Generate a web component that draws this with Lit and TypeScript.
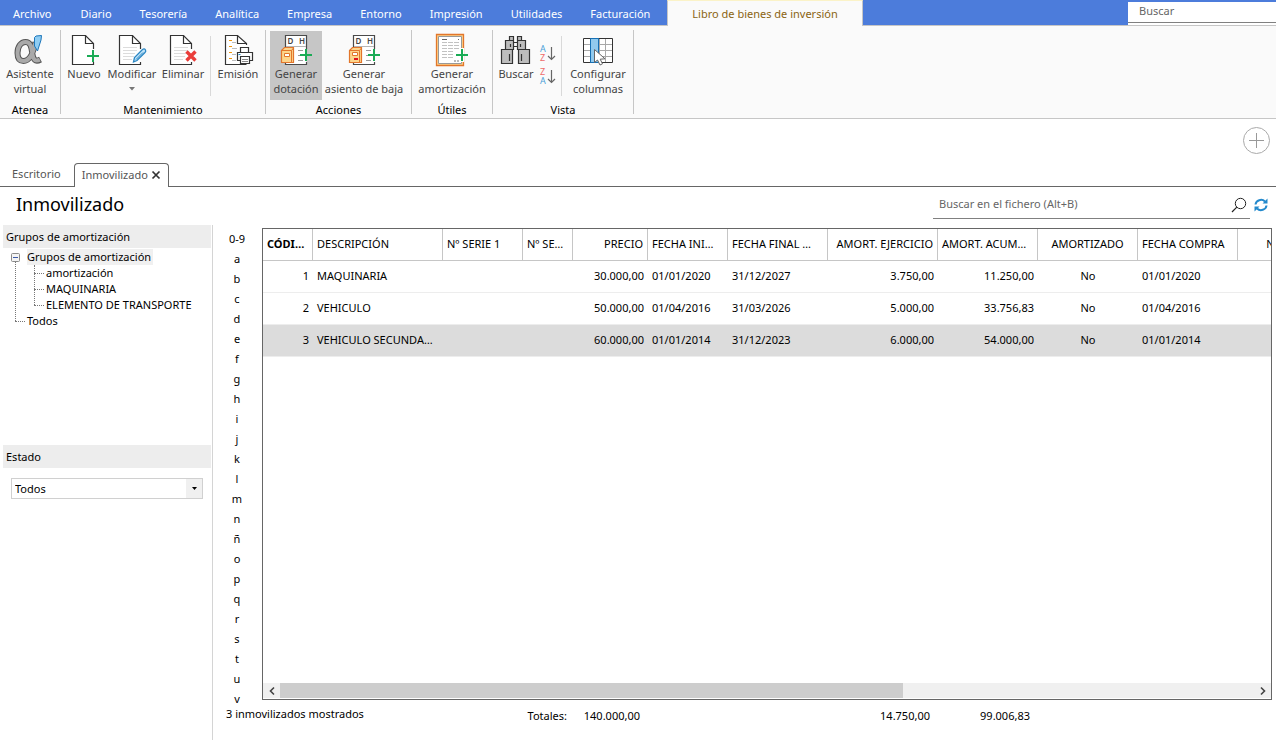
import { LitElement, html, svg, css } from "lit";
import { customElement, state } from "lit/decorators.js";
import { classMap } from "lit/directives/class-map.js";

const MENU = ["Archivo", "Diario", "Tesorería", "Analítica", "Empresa", "Entorno", "Impresión", "Utilidades", "Facturación"];

const LETTERS = ["0-9", ..."abcdefghijklmnñopqrstuv"];

interface Column { label: string; width: number; align: string; strong?: boolean }

const COLUMNS: Column[] = [
  { label: "CÓDIGO", width: 50, align: "right", strong: true },
  { label: "DESCRIPCIÓN", width: 130, align: "left" },
  { label: "Nº SERIE 1", width: 80, align: "left" },
  { label: "Nº SERIE 2", width: 50, align: "left" },
  { label: "PRECIO", width: 75, align: "right" },
  { label: "FECHA INICIO", width: 80, align: "left" },
  { label: "FECHA FINAL MÁXIMA", width: 100, align: "left" },
  { label: "AMORT. EJERCICIO", width: 110, align: "right" },
  { label: "AMORT. ACUMULADA", width: 100, align: "right" },
  { label: "AMORTIZADO", width: 100, align: "center" },
  { label: "FECHA COMPRA", width: 100, align: "left" },
  { label: "Nº FACTURA", width: 120, align: "center" },
];

const ROWS = [
  ["1", "MAQUINARIA", "", "", "30.000,00", "01/01/2020", "31/12/2027", "3.750,00", "11.250,00", "No", "01/01/2020", ""],
  ["2", "VEHICULO", "", "", "50.000,00", "01/04/2016", "31/03/2026", "5.000,00", "33.756,83", "No", "01/04/2016", ""],
  ["3", "VEHICULO SECUNDARIO", "", "", "60.000,00", "01/01/2014", "31/12/2023", "6.000,00", "54.000,00", "No", "01/01/2014", ""],
];

const plus = (x: number, y: number) => svg`
  <path d="M${x - 6} ${y}h12M${x} ${y - 6}v12" stroke="#1aab55" stroke-width="2" fill="none"/>`;

const sheet = svg`
  <path d="M24.5 14V8.5L16.5 .5H3.5V29.5H24.5V27" fill="#fff" stroke="#333" stroke-width="1.2"/>
  <path d="M16.5 .5V8.5H24.5" fill="none" stroke="#333" stroke-width="1.2"/>`;

const sheetLines = svg`
  <path d="M7 12.5h14M7 15.5h14M7 18.5h12M7 21.5h11M7 24.5h9" stroke="#dcdcdc" fill="none"/>`;

const ledger = (mark: unknown) => svg`
  <path d="M26.5 14V.5H5.5V29.5H26.5V27" fill="#fff" stroke="#4a4a4a" stroke-width="1.2"/>
  <path d="M6 11.5H26" stroke="#b5b5b5"/>
  <text x="7.5" y="9" font-size="8" font-weight="600" fill="#444">D</text>
  <text x="19" y="9" font-size="8" font-weight="600" fill="#444">H</text>
  <path d="M18 15.5h5M18 20.5h2M18 25.5h5M25 15.5h1M25 25.5h1" stroke="#9a9a9a"/>
  <path d="M1.5 15.5L4.5 12.5H13.5V27.5H1.5Z" fill="#fdd58c" stroke="#e2762b" stroke-width="1.2"/>
  <path d="M1.5 15.5H11.5V27.5M11.5 15.5L13.5 13" fill="none" stroke="#e2762b"/>
  ${mark}
  ${plus(26, 20)}`;

const ICONS: Record<string, unknown> = {
  atenea: svg`
    <path d="M21.5 7C19.5 17 16.5 26 9.5 26C5 26 3.5 22.5 3.5 18C3.5 11.5 7 7 11.5 7C17.5 7 17.5 14 18.5 19.5C19.2 24 21 27.5 26.5 24.5" fill="none" stroke="#555" stroke-width="6"/>
    <path d="M21.3 8C19.5 17 16.5 26 9.5 26C5 26 3.5 22.5 3.5 18C3.5 11.5 7 7 11.5 7C17.5 7 17.5 14 18.5 19.5C19.2 24 21 27 25.8 24.6" fill="none" stroke="#a9a9a9" stroke-width="4"/>
    <path d="M20.5 2.5L22 1L27.5 .5L27 5L23.5 16L20.5 11Z" fill="#8fcdf3" stroke="#1d76ba"/>`,
  nuevo: svg`<g transform="translate(1 0)">${sheet}${plus(24, 21)}</g>`,
  modificar: svg`${sheet}${sheetLines}
    <path d="M17.5 27L18.5 22.5L26.5 14.5Q28.5 13.2 29.5 15Q30.2 16.5 29 17.5L21 25.5Z" fill="#bfe3f8" stroke="#2b87c4" stroke-width="1.3"/>
    <path d="M20 24.5L27 17.5" stroke="#2b87c4"/>`,
  eliminar: svg`${sheet}${sheetLines}
    <path d="M19.5 16.5L28.5 25.5M28.5 16.5L19.5 25.5" stroke="#ea3d3a" stroke-width="3.4"/>`,
  emision: svg`
    <path d="M24.5 10V8.5L15.5 .5H3.5V29.5H24.5" fill="#fff" stroke="#333" stroke-width="1.2"/>
    <path d="M15.5 .5V8.5H24.5" fill="none" stroke="#333" stroke-width="1.2"/>
    <path d="M7 5.5h3M7 11.5h3M7 17.5h3M7 23.5h3" stroke="#f0960f" stroke-width="1.2"/>
    <path d="M10 7.5h4M10 13.5h5M10 19.5h4M10 25.5h4" stroke="#bdbdbd"/>
    <path d="M18.5 17.5V12.5H26.5V17.5" fill="#fff" stroke="#333" stroke-width="1.2"/>
    <path d="M15.5 17.5H30.5V25.5H15.5Z" fill="#fff" stroke="#333" stroke-width="1.2"/>
    <path d="M18.5 21.5H27.5V28.5H18.5Z" fill="#fff" stroke="#333" stroke-width="1.2"/>
    <path d="M20 24.5h6M20 26.5h6" stroke="#888"/><path d="M16.5 19.5h2" stroke="#1d86c8"/>`,
  dotacion: ledger(svg`<path d="M4.5 18.5h5v3h-5z" fill="#fff" stroke="#e2762b"/>`),
  baja: ledger(svg`<path d="M4.5 17.5h5v3h-5z" fill="#fff" stroke="#e2762b"/><path d="M6 24h4" stroke="#e01020" stroke-width="2"/>`),
  amortizacion: svg`<g transform="translate(-2 0)">
    <path d="M2.5 -.5H29.5V30.5H2.5Z" fill="#fdd58c" stroke="#e2762b" stroke-width="1.3"/>
    <path d="M4.5 1.5H27.5V28.5H4.5Z" fill="#fff" stroke="#999"/>
    <path d="M8 4.5h5M24 4.5h1" stroke="#666"/>
    <path d="M8 7.5h17M8 10.5h17M8 13.5h17M8 16.5h12M8 19.5h12M8 22.5h12" stroke="#c2c2c2" stroke-dasharray="5 1"/>
    <path d="M20 26h2M23 26h2" stroke="#bbb" stroke-width="2"/>
    <path d="M28 13V27M21 20H30" stroke="#fff" stroke-width="4"/>
    ${plus(28, 20)}</g>`,
  buscar: svg`
    <g fill="#bdbdbd" stroke="#333" stroke-width="1.2">
      <path d="M9.5 1.5h4v4h-4zM17.5 1.5h4v4h-4zM5.5 5.5h8v9h-8zM17.5 5.5h8v9h-8z"/>
      <path d="M1.5 14.5h11v14h-11zM18.5 14.5h11v14h-11z"/>
      <path d="M13.5 7.5h4M13.5 11.5h4M10.5 9v3M20.5 9v3M9.5 19v7M21.5 19v7" fill="none"/>
    </g>`,
  columnas: svg`
    <path d="M1.5 3.5H30.5V27.5H1.5Z" fill="#fff" stroke="#333"/>
    <path d="M2 9.5H30M2 15.5H30M2 21.5H30M17.5 4V27M23.5 4V27" stroke="#a8a8a8" fill="none"/>
    <path d="M8.5 3.5H16.5V27.5H8.5Z" fill="#92caee" stroke="#1670b5"/>
    <path d="M12.5 14.5V27.5L15.5 25L18 30L20.5 28.8L18.2 24.2L23 23.8Z" fill="#fff" stroke="#666"/>`,
};

const icon = (name: string) => html`<svg class="icon" width="32" height="32" viewBox="0 -1 32 32" aria-hidden="true">${ICONS[name]}</svg>`;

const sortIcon = (top: string, bottom: string, topColor: string, bottomColor: string) => html`
  <svg width="16" height="18" viewBox="0 0 16 18" aria-hidden="true">
    <text x="0" y="8" font-size="9" fill=${topColor}>${top}</text>
    <text x="0" y="17" font-size="9" fill=${bottomColor}>${bottom}</text>
    <path d="M11.5 3V15.5M8 12L11.5 15.5L15 12" fill="none" stroke="#666" stroke-width="1.2"/>
  </svg>`;

@customElement("app-root")
export class AppRoot extends LitElement {
  @state() private selected = 2;

  static styles = css`
    :host {
      display: flex;
      flex-direction: column;
      height: 100vh;
      overflow: hidden;
      background: #fff;
      color: #000;
      font: 11px/16px "Noto Sans", "Open Sans", sans-serif;
    }
    * { box-sizing: border-box; }
    button, input, select { font: inherit; color: inherit; border: 0; padding: 0; margin: 0; background: none; border-radius: 0; }
    svg { display: block; overflow: visible; }

    .menubar { display: flex; height: 26px; background: #4c7cdb; border-bottom: 1px solid #c6c6c6; flex: none; }
    .menu { padding: 2px 14px 0; color: #fff; }
    .menu:first-child { padding-right: 15px; padding-left: 13px; }
    .menu.context {
      height: 26px; margin-left: 3px; padding: 0 24px; color: #8a6412; background: #fafafa;
      border: 1px solid #c6c6c6; border-bottom: 0; border-top: 1px solid #fbf3c8;
    }
    .global-search {
      margin: 2px 0 0 auto; width: 148px; height: 21px; padding: 0 11px 3px; background: #fff;
      border-bottom: 1px solid #808080; box-shadow: 0 2px 0 #fff;
    }
    input::placeholder { color: #666; opacity: 1; }

    .ribbon { display: flex; height: 93px; background: #fafafa; border-bottom: 1px solid #c6c6c6; flex: none; padding-top: 4px; }
    .group { display: flex; flex-direction: column; height: 84px; border-right: 1px solid #c6c6c6; }
    .tools { display: flex; height: 70px; padding-top: 1px; }
    .caption { text-align: center; line-height: 20px; }
    .tool {
      display: flex; flex-direction: column; align-items: center; height: 69px; padding-top: 3px;
      color: #444; line-height: 15px; white-space: nowrap;
    }
    .tool.active { background: #c6c6c6; }
    .tool .icon { flex: none; }
    .tool .arrow { margin-top: 6px; }
    .w46 { width: 46px; } .w50 { width: 50px; } .w52 { width: 52px; }
    .w60 { width: 60px; } .w70 { width: 70px; } .w80 { width: 80px; } .w84 { width: 84px; }
    .rule { width: 1px; height: 60px; margin: 5px 1px 0; background: #d9d9d9; flex: none; }
    .mantenimiento .tools { padding-right: 1px; }
    .acciones .tools { padding-left: 4px; padding-right: 5px; }
    .sorts { display: flex; flex-direction: column; gap: 5px; width: 21px; padding: 13px 0 0 1px; }

    .tabs { display: flex; height: 68px; align-items: flex-end; border-bottom: 1px solid #666; flex: none; }
    .tab { height: 24px; padding: 0 0 1px 12px; color: #555; line-height: 22px; }
    .tab.current {
      display: flex; align-items: center; gap: 4px; margin: 0 0 -1px 13px; padding: 0 8px 2px 7px; background: #fff;
      border: 1px solid #666; border-bottom: 0; border-radius: 4px 4px 0 0;
    }
    .add { margin: 0 6px 32px auto; }

    .titlebar { display: flex; justify-content: space-between; height: 38px; flex: none; }
    h1 { margin: 0; padding: 4px 0 0 16px; font-size: 18px; line-height: 26px; font-weight: 400; }
    .finder { display: flex; padding-right: 8px; gap: 4px; }
    .field { display: flex; width: 317px; height: 32px; padding: 4px 3px 0 6px; border-bottom: 1px solid #808080; }
    .field input { flex: 1; min-width: 0; outline: 0; padding-bottom: 2px; }
    .refresh { height: 32px; padding-top: 4px; }

    .main { display: flex; flex: 1; min-height: 0; }
    aside { width: 213px; flex: none; padding-left: 3px; border-right: 1px solid #d4d4d4; }
    h2 { margin: 0 1px 0 0; height: 23px; padding-left: 3px; font: inherit; line-height: 24px; background: #ededed; }
    .groups { height: 220px; }
    ul { list-style: none; margin: 0; padding: 0; }
    .tree { padding: 1px 0 0 24px; }
    .tree li { position: relative; line-height: 16px; }
    .tree .leaf::before { content: ""; position: absolute; left: -12px; top: 8px; width: 10px; border-top: 1px dotted #777; }
    .tree .root > .label { display: inline-block; background: #f0f0f0; padding: 0 2px 0 0; }
    .tree .root::before { content: ""; position: absolute; left: -12px; top: 12px; bottom: -8px; border-left: 1px dotted #777; }
    .tree ul { padding-left: 19px; position: relative; }
    .tree ul::before { content: ""; position: absolute; left: 7px; top: 0; bottom: 8px; border-left: 1px dotted #777; }
    .expander { position: absolute; left: -16px; top: 4px; }
    .combo { display: grid; grid-template-columns: 1fr 16px; width: 192px; height: 21px; margin: 10px 0 0 8px; border: 1px solid #d0d0d0; }
    .combo select { grid-area: 1 / 1 / 2 / 3; appearance: none; padding-left: 3px; outline: 0; }
    .combo span { grid-area: 1 / 2; display: grid; place-items: center; background: #f0f0f0; pointer-events: none; }

    .letters { width: 48px; flex: none; display: flex; flex-direction: column; padding-top: 4px; margin: 0 1px -9px 0; }
    .letters button { height: 20px; flex: none; text-align: center; line-height: 20px; }
    .pane { display: flex; flex: 1; min-height: 0; }
    .workspace { display: flex; flex-direction: column; flex: 1; min-width: 0; padding-right: 4px; }
    .grid {
      display: flex; flex-direction: column; flex: 1; min-width: 0; margin-top: 3px; overflow: hidden;
      border: 1px solid #666;
    }
    .viewport { flex: 1; overflow: hidden; }
    table { border-collapse: separate; border-spacing: 0; table-layout: fixed; width: 1095px; }
    th, td { height: 32px; padding: 0 4px 1px; overflow: hidden; white-space: nowrap; text-overflow: ellipsis; font-weight: 400; }
    th { border-right: 1px solid #c6c6c6; border-bottom: 1px solid #c6c6c6; }
    th.left { padding-right: 8px; }
    th.strong { font-weight: 700; }
    td { border-bottom: 1px solid #ededed; }
    .left { text-align: left; }
    .right { text-align: right; }
    .center { text-align: center; }
    tr.selected td { background: #dcdcdc; }
    .scrollbar { display: flex; height: 16px; background: #f0f0f0; border-bottom: 1px solid #fff; flex: none; }
    .scrollbar button { width: 17px; display: grid; place-items: center; flex: none; }
    .rail { flex: 1; }
    .thumb { display: block; width: 64%; height: 15px; background: #cdcdcd; }
    .status { display: flex; height: 40px; flex: none; line-height: 16px; }
    .count { width: 264px; padding: 6px 0 0 13px; }
    .sum { padding-top: 8px; text-align: right; }
    .s1 { width: 90px; } .s2 { width: 73px; } .s3 { width: 290px; } .s4 { width: 100px; }
  `;

  private tool(name: string, lines: string[], width: string, active = false) {
    return html`<button class=${classMap({ tool: true, [width]: true, active })}>${icon(name)}${lines.map((l) => html`<span>${l}</span>`)}</button>`;
  }

  private ribbon() {
    return html`
      <div class="ribbon">
        <section class="group">
          <div class="tools">${this.tool("atenea", ["Asistente", "virtual"], "w60")}</div>
          <div class="caption">Atenea</div>
        </section>
        <section class="group mantenimiento">
          <div class="tools">
            ${this.tool("nuevo", ["Nuevo"], "w46")}
            <button class="tool w50">${icon("modificar")}<span>Modificar</span>
              <svg class="arrow" width="6" height="4" viewBox="0 0 6 4"><path d="M0 0H6L3 3.5Z" fill="#777"/></svg>
            </button>
            ${this.tool("eliminar", ["Eliminar"], "w52")}
            <span class="rule"></span>
            ${this.tool("emision", ["Emisión"], "w52")}
          </div>
          <div class="caption">Mantenimiento</div>
        </section>
        <section class="group acciones">
          <div class="tools">
            ${this.tool("dotacion", ["Generar", "dotación"], "w52", true)}
            ${this.tool("baja", ["Generar", "asiento de baja"], "w84")}
          </div>
          <div class="caption">Acciones</div>
        </section>
        <section class="group">
          <div class="tools">${this.tool("amortizacion", ["Generar", "amortización"], "w80")}</div>
          <div class="caption">Útiles</div>
        </section>
        <section class="group">
          <div class="tools">
            ${this.tool("buscar", ["Buscar"], "w46")}
            <div class="sorts">
              <button aria-label="Orden ascendente">${sortIcon("A", "Z", "#4a9fd8", "#ee6a6a")}</button>
              <button aria-label="Orden descendente">${sortIcon("Z", "A", "#ee6a6a", "#4a9fd8")}</button>
            </div>
            <span class="rule"></span>
            ${this.tool("columnas", ["Configurar", "columnas"], "w70")}
          </div>
          <div class="caption">Vista</div>
        </section>
      </div>`;
  }

  private sidebar() {
    return html`
      <aside>
        <section class="groups">
          <h2>Grupos de amortización</h2>
          <ul class="tree">
            <li class="root">
              <button class="expander" aria-label="Contraer">
                <svg width="9" height="9" viewBox="0 0 9 9"><rect x=".5" y=".5" width="8" height="8" rx="1" fill="#f4f4f4" stroke="#8a8a8a"/><path d="M2 4.5H7" stroke="#3c5aa8"/></svg>
              </button>
              <span class="label">Grupos de amortización</span>
              <ul>
                <li class="leaf">amortización</li>
                <li class="leaf">MAQUINARIA</li>
                <li class="leaf">ELEMENTO DE TRANSPORTE</li>
              </ul>
            </li>
            <li class="leaf">Todos</li>
          </ul>
        </section>
        <h2><label for="estado">Estado</label></h2>
        <div class="combo">
          <select id="estado"><option>Todos</option></select>
          <span><svg width="5" height="3" viewBox="0 0 5 3"><path d="M0 0H5L2.5 3Z" fill="#000"/></svg></span>
        </div>
      </aside>`;
  }

  private table() {
    return html`
      <table>
        <colgroup>${COLUMNS.map((c) => html`<col style="width:${c.width}px">`)}</colgroup>
        <thead><tr>${COLUMNS.map((c) => html`<th class=${classMap({ [c.align]: true, strong: !!c.strong })}>${c.label}</th>`)}</tr></thead>
        <tbody>
          ${ROWS.map((row, r) => html`
            <tr class=${classMap({ selected: r === this.selected })} @click=${() => (this.selected = r)}>
              ${row.map((cell, i) => html`<td class=${COLUMNS[i].align}>${cell}</td>`)}
            </tr>`)}
        </tbody>
      </table>`;
  }

  render() {
    return html`
      <nav class="menubar">
        ${MENU.map((m) => html`<button class="menu">${m}</button>`)}
        <button class="menu context">Libro de bienes de inversión</button>
        <input class="global-search" placeholder="Buscar" aria-label="Buscar">
      </nav>
      ${this.ribbon()}
      <div class="tabs">
        <button class="tab">Escritorio</button>
        <button class="tab current">Inmovilizado
          <svg width="8" height="8" viewBox="0 0 8 8"><path d="M.5 .5L7.5 7.5M7.5 .5L.5 7.5" stroke="#333" stroke-width="1.7"/></svg>
        </button>
        <button class="add" aria-label="Añadir">
          <svg width="28" height="28" viewBox="0 0 28 28"><circle cx="14.5" cy="14.5" r="13" fill="none" stroke="#aaa"/><path d="M7 14.5H22M14.5 7V22" stroke="#999"/></svg>
        </button>
      </div>
      <header class="titlebar">
        <h1>Inmovilizado</h1>
        <div class="finder">
          <div class="field">
            <input placeholder="Buscar en el fichero (Alt+B)" aria-label="Buscar en el fichero">
            <button aria-label="Buscar"><svg width="16" height="16" viewBox="0 0 16 16"><circle cx="9.5" cy="6.5" r="5.2" fill="none" stroke="#222"/><path d="M5.8 10.2L1 15" stroke="#222" stroke-width="1.2"/></svg></button>
          </div>
          <button class="refresh" aria-label="Actualizar">
            <svg width="14" height="14" viewBox="0 0 14 14"><path d="M1.5 6.5A5.5 5 0 0 1 11 3.5M12.5 7.5A5.5 5 0 0 1 3 10.5" fill="none" stroke="#2389cc" stroke-width="2"/><path d="M13.5 .5V5.5H8.5ZM.5 13.5V8.5H5.5Z" fill="#2389cc"/></svg>
          </button>
        </div>
      </header>
      <div class="main">
        ${this.sidebar()}
        <div class="workspace">
          <div class="pane">
            <div class="letters">${LETTERS.map((l) => html`<button>${l}</button>`)}</div>
            <div class="grid">
              <div class="viewport">${this.table()}</div>
              <div class="scrollbar">
                <button aria-label="Desplazar a la izquierda"><svg width="6" height="8" viewBox="0 0 6 8"><path d="M5 .5L1.5 4L5 7.5" fill="none" stroke="#444" stroke-width="1.6"/></svg></button>
                <div class="rail"><span class="thumb"></span></div>
                <button aria-label="Desplazar a la derecha"><svg width="6" height="8" viewBox="0 0 6 8"><path d="M1 .5L4.500 4L1 7.5" fill="none" stroke="#444" stroke-width="1.6"/></svg></button>
              </div>
            </div>
          </div>
          <footer class="status">
            <span class="count">3 inmovilizados mostrados</span>
            <span class="sum s1">Totales:</span>
            <span class="sum s2">140.000,00</span>
            <span class="sum s3">14.750,00</span>
            <span class="sum s4">99.006,83</span>
          </footer>
        </div>
      </div>`;
  }
}
